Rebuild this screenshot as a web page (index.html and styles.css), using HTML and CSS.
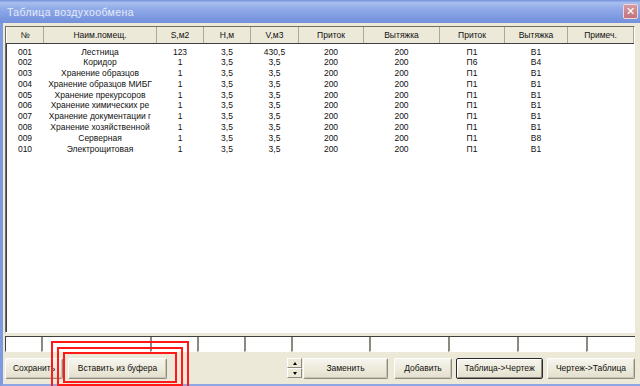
FILE: index.html
```html
<!DOCTYPE html>
<html lang="ru">

<head>
    <meta charset="UTF-8">
    <title>Таблица воздухообмена</title>
    <link rel="stylesheet" href="styles.css">
</head>

<body>
    <div class="window">
        <div class="titlebar">
            <span class="caption">Таблица воздухообмена</span>
            <button class="close">&#x2715;</button>
        </div>

        <div class="frame">
            <div class="list">
                <table class="grid">
                    <colgroup>
                        <col style="width:37px">
                        <col style="width:113px">
                        <col style="width:47px">
                        <col style="width:47px">
                        <col style="width:48px">
                        <col style="width:65px">
                        <col style="width:76px">
                        <col style="width:65px">
                        <col style="width:63px">
                        <col style="width:66px">
                    </colgroup>
                    <thead>
                        <tr>
                            <th>№</th>
                            <th>Наим.помещ.</th>
                            <th>S,м2</th>
                            <th>H,м</th>
                            <th>V,м3</th>
                            <th>Приток</th>
                            <th>Вытяжка</th>
                            <th>Приток</th>
                            <th>Вытяжка</th>
                            <th>Примеч.</th>
                        </tr>
                    </thead>
                    <tbody>
                        <tr class="first"><td>001</td><td>Лестница</td><td>123</td><td>3,5</td><td>430,5</td><td>200</td><td>200</td><td>П1</td><td>В1</td><td></td></tr>
                        <tr><td>002</td><td>Коридор</td><td>1</td><td>3,5</td><td>3,5</td><td>200</td><td>200</td><td>П6</td><td>В4</td><td></td></tr>
                        <tr><td>003</td><td>Хранение образцов</td><td>1</td><td>3,5</td><td>3,5</td><td>200</td><td>200</td><td>П1</td><td>В1</td><td></td></tr>
                        <tr><td>004</td><td>Хранение образцов МИБГ</td><td>1</td><td>3,5</td><td>3,5</td><td>200</td><td>200</td><td>П1</td><td>В1</td><td></td></tr>
                        <tr><td>005</td><td>Хранение прекурсоров</td><td>1</td><td>3,5</td><td>3,5</td><td>200</td><td>200</td><td>П1</td><td>В1</td><td></td></tr>
                        <tr><td>006</td><td>Хранение химических ре</td><td>1</td><td>3,5</td><td>3,5</td><td>200</td><td>200</td><td>П1</td><td>В1</td><td></td></tr>
                        <tr><td>007</td><td>Хранение документации г</td><td>1</td><td>3,5</td><td>3,5</td><td>200</td><td>200</td><td>П1</td><td>В1</td><td></td></tr>
                        <tr><td>008</td><td>Хранение хозяйственной</td><td>1</td><td>3,5</td><td>3,5</td><td>200</td><td>200</td><td>П1</td><td>В1</td><td></td></tr>
                        <tr><td>009</td><td>Серверная</td><td>1</td><td>3,5</td><td>3,5</td><td>200</td><td>200</td><td>П1</td><td>В8</td><td></td></tr>
                        <tr><td>010</td><td>Электрощитовая</td><td>1</td><td>3,5</td><td>3,5</td><td>200</td><td>200</td><td>П1</td><td>В1</td><td></td></tr>
                    </tbody>
                </table>
            </div>

            <div class="edits">
                <input class="edit" style="width:36px">
                <input class="edit" style="width:109px">
                <input class="edit" style="width:47px">
                <input class="edit" style="width:47px">
                <input class="edit" style="width:47px">
                <input class="edit" style="width:78px">
                <input class="edit" style="width:79px">
                <input class="edit" style="width:69px">
                <input class="edit" style="width:69px">
                <input class="edit" style="width:49px">
            </div>

            <div class="buttons">
                <button class="btn save">Сохранить</button>
                <button class="btn paste">Вставить из буфера</button>
                <div class="spin">
                    <button class="spin-btn"><span class="arrow-up"></span></button>
                    <button class="spin-btn"><span class="arrow-down"></span></button>
                </div>
                <button class="btn replace">Заменить</button>
                <button class="btn add">Добавить</button>
                <button class="btn default to-draw">Таблица-&gt;Чертеж</button>
                <button class="btn to-table">Чертеж-&gt;Таблица</button>
            </div>
        </div>

        <!-- red marks drawn over the screenshot -->
        <div class="mark mark-outer"></div>
        <div class="mark mark-middle"></div>
        <div class="mark mark-inner"></div>
    </div>
</body>

</html>
```

FILE: styles.css
```css
* {
    box-sizing: border-box;
}

body {
    margin: 0;
    width: 640px;
    height: 386px;
    overflow: hidden;
    background: #ece9d8;
    font-family: "Liberation Sans", Arial, sans-serif;
    font-size: 8.5px;
    color: #111;
}

.window {
    position: relative;
    width: 640px;
    height: 386px;
    display: flex;
    flex-direction: column;
}

.titlebar {
    height: 23px;
    display: flex;
    align-items: center;
    justify-content: space-between;
    padding: 0 2px 0 7px;
    background: linear-gradient(to bottom, #7490d8 0%, #a9bff0 12%, #93ace9 35%, #7d99e0 75%, #7390db 100%);
}

.caption {
    color: #e4ebfa;
    font-size: 10.5px;
    letter-spacing: 0.4px;
    padding-top: 1px;
}

.close {
    width: 15px;
    height: 15px;
    padding: 0;
    border: 1px solid #f2d6d6;
    border-radius: 2px;
    background: linear-gradient(to bottom, #d49aa0, #c2737c);
    color: #fff;
    font-size: 11px;
    font-weight: bold;
    line-height: 12px;
    font-family: "DejaVu Sans", sans-serif;
}

.frame {
    flex: 1;
    display: flex;
    flex-direction: column;
    border-left: 3px solid #7d99e0;
    border-bottom: 2px solid #8ea6e4;
    padding: 3px 5px 0 2px;
}

.list {
    height: 307px;
    background: #fff;
    border: 1px solid;
    border-color: #716f64 #fff #fff #716f64;
    box-shadow: inset 1px 1px 0 #404040;
    overflow: hidden;
}

.grid {
    table-layout: fixed;
    border-collapse: collapse;
    width: 627px;
}

.grid th {
    height: 16px;
    padding: 0;
    font-weight: normal;
    background: #ece9d8;
    border-left: 1px solid #fff;
    border-right: 1px solid #aca899;
    border-bottom: 1px solid #404040;
    text-align: center;
}

.grid td {
    height: 10.8px;
    line-height: 10.8px;
    padding: 0;
    text-align: center;
    white-space: nowrap;
    overflow: hidden;
}

.grid tr.first td {
    padding-top: 3px;
    height: 13.8px;
}

.edits {
    display: flex;
    margin-top: 3px;
    height: 16px;
    border-top: 1px solid #404040;
}

.edit {
    height: 15px;
    margin: 0;
    padding: 0;
    background: #fff;
    border: 0;
    border-left: 2px solid #8c8a80;
    border-bottom: 1px solid #fff;
}

.edit:first-child {
    border-left: 1px solid #404040;
}

.buttons {
    display: flex;
    align-items: center;
    margin-top: 5px;
    height: 22px;
}

.btn {
    height: 21px;
    padding: 0;
    font-family: inherit;
    font-size: 8.5px;
    color: #111;
    background: linear-gradient(to bottom, #f6f5ef, #ece9d8 60%, #e2ded0);
    border: 1px solid;
    border-color: #fff #8d8b7f #8d8b7f #fff;
    border-radius: 2px;
    box-shadow: inset -1px -1px 0 #c9c5b5;
}

.save {
    width: 58px;
}

.paste {
    width: 99px;
    margin-left: 5px;
}

.spin {
    margin-left: auto;
    width: 15px;
    height: 20px;
    display: flex;
    flex-direction: column;
}

.spin-btn {
    flex: 1;
    padding: 0;
    display: flex;
    align-items: center;
    justify-content: center;
    background: #ece9d8;
    border: 1px solid;
    border-color: #fff #8d8b7f #8d8b7f #fff;
}

.arrow-up {
    border-left: 2px solid transparent;
    border-right: 2px solid transparent;
    border-bottom: 3px solid #000;
}

.arrow-down {
    border-left: 2px solid transparent;
    border-right: 2px solid transparent;
    border-top: 3px solid #000;
}

.replace {
    width: 85px;
    margin-left: 1px;
}

.add {
    width: 58px;
    margin-left: 6px;
}

.to-draw {
    width: 87px;
    margin-left: 4px;
}

.default {
    border: 1px solid #2a2a2a;
    box-shadow: inset 1px 1px 0 #fff, inset -1px -1px 0 #8d8b7f;
}

.to-table {
    width: 88px;
    margin-left: 4px;
}

.mark {
    position: absolute;
    border: 2px solid #ff1a1a;
}

.mark-outer {
    left: 51px;
    top: 341px;
    width: 138px;
    height: 47px;
}

.mark-middle {
    left: 57px;
    top: 347px;
    width: 126px;
    height: 39px;
}

.mark-inner {
    left: 63px;
    top: 352px;
    width: 114px;
    height: 31px;
}
```
